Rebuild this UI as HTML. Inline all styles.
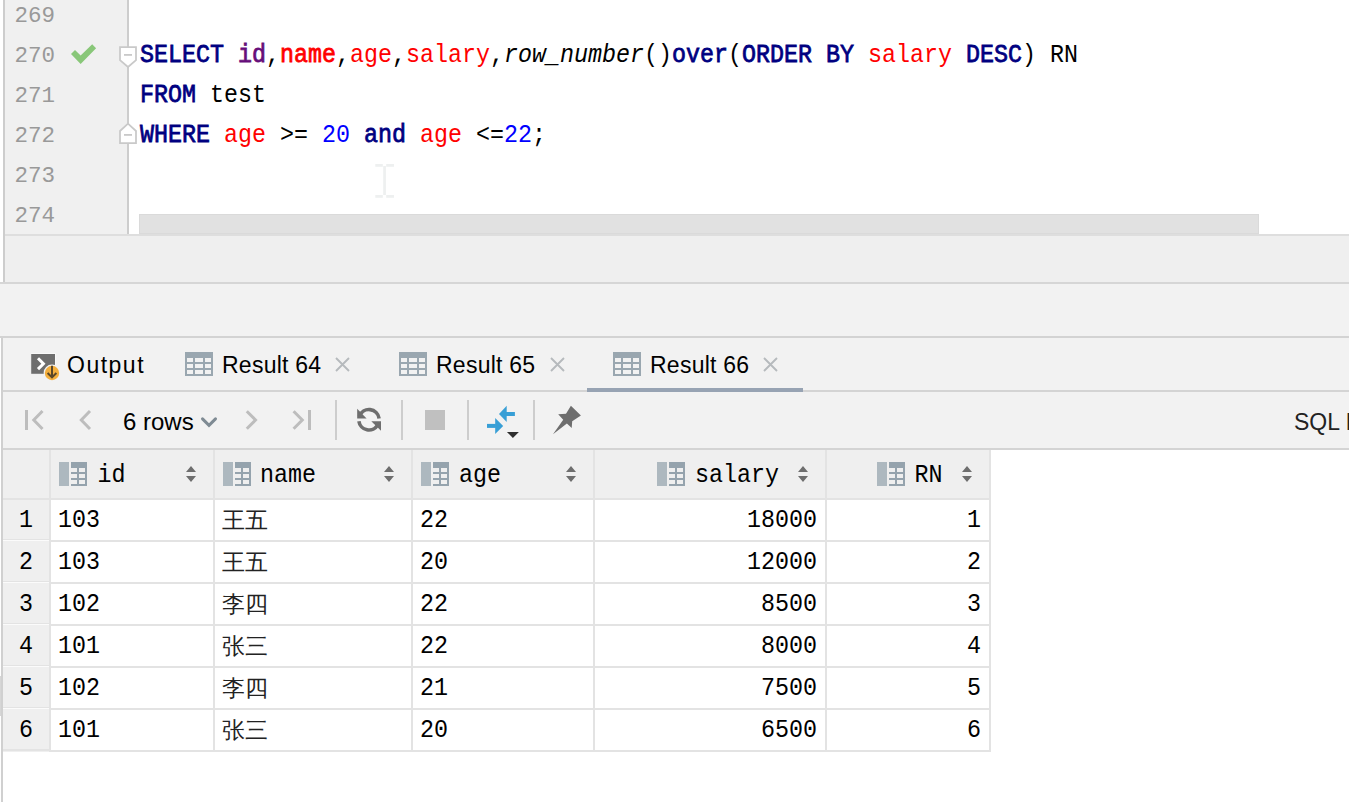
<!DOCTYPE html>
<html><head><meta charset="utf-8">
<style>
*{margin:0;padding:0;box-sizing:border-box}
html,body{width:1349px;height:802px;overflow:hidden;background:#fff}
body{position:relative;font-family:"Liberation Sans",sans-serif}
.abs{position:absolute}
.mono{font-family:"Liberation Mono",monospace}
/* editor */
#ed-left{left:0;top:0;width:3px;height:282px;background:#fff}
#ed-lb{left:3px;top:0;width:2px;height:282px;background:#cdcdcd}
#gutter{left:5px;top:0;width:122px;height:234px;background:#f0f0f0}
#gline{left:127px;top:0;width:2px;height:234px;background:#cdcdcd}
#code{left:129px;top:0;width:1220px;height:234px;background:#fff}
.ln{position:absolute;left:5px;width:50px;text-align:right;font-family:"Liberation Mono",monospace;font-size:22.5px;color:#999;line-height:40px;height:40px}
.cl{position:absolute;left:140px;transform:scaleY(1.12);transform-origin:0 10px;margin-top:.5px;font-family:"Liberation Mono",monospace;font-size:23.33px;line-height:40px;height:40px;white-space:pre;color:#000}
.kw{color:#000080;-webkit-text-stroke:0.7px #000080}
.col{color:#ff0000}
.colb{color:#ff0000;-webkit-text-stroke:0.7px #ff0000}
.pur{color:#660e7a;-webkit-text-stroke:0.7px #660e7a}
.num{color:#0000ff}
.it{font-style:italic}
#thumb{left:139px;top:214px;width:1120px;height:20px;background:#e1e1e1;border:1px solid #dadada}
#hl1{left:5px;top:234px;width:1344px;height:2px;background:#dedede}
#stat{left:5px;top:236px;width:1344px;height:46px;background:#efefef}
#hl2{left:0;top:282px;width:1349px;height:2px;background:#d6d6d6}
#gap{left:0;top:284px;width:1349px;height:52px;background:#f2f2f2}
#hl3{left:0;top:336px;width:1349px;height:2px;background:#d3d3d3}
/* bottom panel */
#bp-lb{left:1px;top:338px;width:2px;height:464px;background:#d0d0d0}
#tabs{left:3px;top:338px;width:1346px;height:52px;background:#f2f2f2}
#hl4{left:3px;top:390px;width:1346px;height:2px;background:#d4d4d4}
#tb{left:3px;top:392px;width:1346px;height:56px;background:#f2f2f2}
#hl5{left:3px;top:448px;width:1346px;height:2px;background:#d4d4d4}
.tabt{position:absolute;top:338.5px;letter-spacing:.25px;height:52px;line-height:52px;font-size:23px;color:#000;white-space:nowrap}
.sep{position:absolute;top:400px;width:2px;height:40px;background:#cdcdcd}
/* grid */
.hdr{position:absolute;top:450px;height:48px;background:#efefef}
.rh{position:absolute;left:3px;width:46px;background:#efefef}
.vl{position:absolute;width:2px;background:#e3e3e3}
.hz{position:absolute;height:2px;background:#e3e3e3}
.cell{position:absolute;transform:scaleY(1.13);transform-origin:0 11px;font-family:"Liberation Mono",monospace;font-size:23.33px;line-height:42px;height:42px;white-space:pre;color:#000}
.r{text-align:right}
.rn{text-align:center}
.rhl{background:#f5f5f5}
.cjk{font-family:"Liberation Serif",serif;font-size:23px;font-weight:300;margin-top:1.5px;color:#222;transform:none!important}
</style></head><body>
<div class="abs" id="ed-left"></div>
<div class="abs" id="ed-lb"></div>
<div class="abs" id="gutter"></div>
<div class="abs" id="gline"></div>
<div class="abs" id="code"></div>

<div class="ln" style="top:-4px">269</div>
<div class="ln" style="top:36px">270</div>
<div class="ln" style="top:76px">271</div>
<div class="ln" style="top:116px">272</div>
<div class="ln" style="top:156px">273</div>
<div class="ln" style="top:196px">274</div>

<div class="cl" style="top:33px"><span class="kw">SELECT</span> <span class="pur">id</span>,<span class="colb">name</span>,<span class="col">age</span>,<span class="col">salary</span>,<span class="it">row_number</span>()<span class="kw">over</span>(<span class="kw">ORDER BY</span> <span class="col">salary</span> <span class="kw">DESC</span>) RN</div>
<div class="cl" style="top:73px"><span class="kw">FROM</span> test</div>
<div class="cl" style="top:113px"><span class="kw">WHERE</span> <span class="col">age</span> &gt;= <span class="num">20</span> <span class="kw">and</span> <span class="col">age</span> &lt;=<span class="num">22</span>;</div>


<!-- gutter icons -->
<svg class="abs" style="left:0;top:0" width="140" height="234">
<polygon points="71,54.1 75,50.1 80.65,55.5 92.2,44.2 96.1,48.25 80.65,63.9" fill="#89c779"/>
<polygon points="120,47 136,47 136,60.2 128,67 120,60.2" fill="#fff" stroke="#c9c9c9" stroke-width="1.75"/>
<rect x="124" y="54" width="8" height="1.8" fill="#c9c9c9"/>
<polygon points="120,131 128,123.6 136,131 136,143 120,143" fill="#fff" stroke="#c9c9c9" stroke-width="1.75"/>
<rect x="124" y="134" width="8" height="1.8" fill="#c9c9c9"/>
</svg>
<svg class="abs" style="left:370px;top:160px" width="30" height="42">
<rect x="5.3" y="4" width="7.5" height="2.8" fill="#eef0f0"/>
<rect x="16.2" y="4" width="7.8" height="2.8" fill="#eef0f0"/>
<rect x="13.2" y="6" width="2.7" height="29" fill="#eef0f0"/>
<rect x="5.3" y="35" width="7.5" height="2.8" fill="#eef0f0"/>
<rect x="16.2" y="35" width="7.8" height="2.8" fill="#eef0f0"/>
</svg>
<div class="abs" id="thumb"></div>
<div class="abs" id="hl1"></div>
<div class="abs" id="stat"></div>
<div class="abs" id="hl2"></div>
<div class="abs" id="gap"></div>
<div class="abs" id="hl3"></div>

<div class="abs" id="bp-lb"></div>
<div class="abs" style="left:0;top:676px;width:1px;height:40px;background:#d6d6d6"></div>
<div class="abs" id="tabs"></div>
<div class="abs" id="hl4"></div>
<div class="abs" id="tb"></div>
<div class="abs" id="hl5"></div>


<svg class="abs" style="left:26px;top:348px" width="40" height="36">
<rect x="4.7" y="5.5" width="24.8" height="20.8" fill="#6e6e6e" stroke="#f9f9f9" stroke-width="1"/>
<path d="M12 10.3L17.4 15.7L12 21.1" stroke="#fff" stroke-width="3" fill="none"/>
<circle cx="26" cy="25" r="8.4" fill="#f2f2f2"/>
<circle cx="26" cy="25" r="7.2" fill="#f4af3d"/>
<path d="M26 17.8V29 M21.6 25L26 29.4L30.4 25" stroke="#5b4727" stroke-width="2" fill="none"/>
</svg>
<svg class="abs" style="left:185px;top:352px" width="28" height="24"><path fill="#9aa7b0" fill-rule="evenodd" d="M0 0h28v24H0z M2 6h6v4H2z M10 6h8v4h-8z M20 6h6v4h-6z M2 12h6v4H2z M10 12h8v4h-8z M20 12h6v4h-6z M2 18h6v4H2z M10 18h8v4h-8z M20 18h6v4h-6z"/></svg><svg class="abs" style="left:335px;top:357px" width="15" height="15"><path d="M1 1L14 14M14 1L1 14" stroke="#b6babd" stroke-width="1.9"/></svg><svg class="abs" style="left:399px;top:352px" width="28" height="24"><path fill="#9aa7b0" fill-rule="evenodd" d="M0 0h28v24H0z M2 6h6v4H2z M10 6h8v4h-8z M20 6h6v4h-6z M2 12h6v4H2z M10 12h8v4h-8z M20 12h6v4h-6z M2 18h6v4H2z M10 18h8v4h-8z M20 18h6v4h-6z"/></svg><svg class="abs" style="left:550px;top:357px" width="15" height="15"><path d="M1 1L14 14M14 1L1 14" stroke="#b6babd" stroke-width="1.9"/></svg><svg class="abs" style="left:613px;top:352px" width="28" height="24"><path fill="#9aa7b0" fill-rule="evenodd" d="M0 0h28v24H0z M2 6h6v4H2z M10 6h8v4h-8z M20 6h6v4h-6z M2 12h6v4H2z M10 12h8v4h-8z M20 12h6v4h-6z M2 18h6v4H2z M10 18h8v4h-8z M20 18h6v4h-6z"/></svg><svg class="abs" style="left:763px;top:357px" width="15" height="15"><path d="M1 1L14 14M14 1L1 14" stroke="#b6babd" stroke-width="1.9"/></svg><div class="tabt" style="left:67px;letter-spacing:1.5px">Output</div>
<div class="tabt" style="left:222px">Result 64</div>
<div class="tabt" style="left:436px">Result 65</div>
<div class="tabt" style="left:650px">Result 66</div>
<div class="abs" style="left:587px;top:388px;width:216px;height:4px;background:#97a3b3"></div>

<div class="abs" style="left:123px;top:394px;height:56px;line-height:56px;font-size:24px;color:#000;white-space:nowrap">6 rows</div>

<svg class="abs" style="left:0;top:392px" width="600" height="56">
<rect x="25" y="18" width="3" height="20" fill="#bdbdbd"/>
<path d="M42.5 19L33.8 28L42.5 37" stroke="#bdbdbd" stroke-width="3" fill="none"/>
<path d="M90 19L81.3 28L90 37" stroke="#bdbdbd" stroke-width="3" fill="none"/>
<path d="M202.5 26.9L209 33.4L215.5 26.9" stroke="#7f8b94" stroke-width="3" fill="none" stroke-linecap="round"/>
<path d="M246.8 19.2L255.5 28L246.8 36.8" stroke="#bdbdbd" stroke-width="3" fill="none"/>
<path d="M293.6 19.2L302.3 28L293.6 36.8" stroke="#bdbdbd" stroke-width="3" fill="none"/>
<rect x="308" y="18" width="3" height="20" fill="#bdbdbd"/>
<g transform="translate(350,10)">
<path d="M9.4 14.3A10.2 10.2 0 0 1 29.1 16.4" stroke="#6e6e6e" stroke-width="3.6" fill="none"/>
<polygon points="7.2,6.7 7.2,16.4 16.6,16.4" fill="#6e6e6e"/>
<path d="M8.9 19.2A10.2 10.2 0 0 0 27.8 22.9" stroke="#6e6e6e" stroke-width="3.6" fill="none"/>
<polygon points="31,19.3 31,28.7 21.3,19.3" fill="#6e6e6e"/>
</g>
<rect x="425" y="18" width="20" height="20" fill="#c0c0c0"/>
<g transform="translate(482,10)">
<polygon points="17,12 24.7,3.7 24.7,19.95" fill="#389fd6"/>
<rect x="24" y="10" width="8.9" height="4" fill="#389fd6"/>
<polygon points="21.2,23.9 13.2,16 13.2,31.9" fill="#389fd6"/>
<rect x="5" y="21.9" width="8.9" height="4" fill="#389fd6"/>
<polygon points="24.9,29.9 36.9,29.9 30.9,35.9" fill="#2f2f2f"/>
</g>
<g transform="translate(546,8)">
<polygon points="24.9,5.7 34.9,15.5 26.2,21.2 25.7,27.9 20.9,23.4 7,34.2 17.2,19.7 12.2,14.2 20,13.7" fill="#6e6e6e"/>
</g>
</svg>
<div class="sep" style="left:335px"></div>
<div class="sep" style="left:401px"></div>
<div class="sep" style="left:467px"></div>
<div class="sep" style="left:533px"></div>
<div class="abs" style="left:1294px;top:394px;height:56px;line-height:56px;font-size:23px;color:#222;white-space:nowrap">SQL I</div>

<!-- grid -->
<div class="hdr" style="left:3px;width:987px"></div>
<div class="abs" style="left:51px;top:500px;width:939px;height:252px;background:#fff"></div>
<div class="rh" style="top:500px;height:252px"></div>
<div class="vl" style="left:49px;top:450px;height:302px"></div>
<div class="vl" style="left:213px;top:450px;height:302px"></div>
<div class="vl" style="left:411px;top:450px;height:302px"></div>
<div class="vl" style="left:593px;top:450px;height:302px"></div>
<div class="vl" style="left:825px;top:450px;height:302px"></div>
<div class="vl" style="left:989px;top:450px;height:302px"></div>
<div class="hz" style="left:51px;top:498px;width:940px"></div>
<div class="abs" style="left:3px;top:498px;width:46px;height:2px;background:#e3e3e3"></div>
<div class="hz" style="left:51px;top:540px;width:940px"></div>
<div class="abs" style="left:3px;top:539px;width:46px;height:2px;background:#e3e3e3"></div><div class="abs" style="left:3px;top:540px;width:46px;height:1px;background:#fbfbfb"></div>
<div class="hz" style="left:51px;top:582px;width:940px"></div>
<div class="abs" style="left:3px;top:581px;width:46px;height:2px;background:#e3e3e3"></div><div class="abs" style="left:3px;top:582px;width:46px;height:1px;background:#fbfbfb"></div>
<div class="hz" style="left:51px;top:624px;width:940px"></div>
<div class="abs" style="left:3px;top:623px;width:46px;height:2px;background:#e3e3e3"></div><div class="abs" style="left:3px;top:624px;width:46px;height:1px;background:#fbfbfb"></div>
<div class="hz" style="left:51px;top:666px;width:940px"></div>
<div class="abs" style="left:3px;top:665px;width:46px;height:2px;background:#e3e3e3"></div><div class="abs" style="left:3px;top:666px;width:46px;height:1px;background:#fbfbfb"></div>
<div class="hz" style="left:51px;top:708px;width:940px"></div>
<div class="abs" style="left:3px;top:707px;width:46px;height:2px;background:#e3e3e3"></div><div class="abs" style="left:3px;top:708px;width:46px;height:1px;background:#fbfbfb"></div>
<div class="hz" style="left:51px;top:750px;width:940px"></div>
<div class="abs" style="left:3px;top:749px;width:46px;height:2px;background:#e3e3e3"></div>
<div class="cell rn" style="left:3px;top:498px;width:46px">1</div>
<div class="cell" style="left:58px;top:498px">103</div>
<div class="cell cjk" style="left:222px;top:498px">王五</div>
<div class="cell" style="left:420px;top:498px">22</div>
<div class="cell r" style="left:595px;top:498px;width:222px">18000</div>
<div class="cell r" style="left:827px;top:498px;width:154px">1</div>
<div class="cell rn" style="left:3px;top:540px;width:46px">2</div>
<div class="cell" style="left:58px;top:540px">103</div>
<div class="cell cjk" style="left:222px;top:540px">王五</div>
<div class="cell" style="left:420px;top:540px">20</div>
<div class="cell r" style="left:595px;top:540px;width:222px">12000</div>
<div class="cell r" style="left:827px;top:540px;width:154px">2</div>
<div class="cell rn" style="left:3px;top:582px;width:46px">3</div>
<div class="cell" style="left:58px;top:582px">102</div>
<div class="cell cjk" style="left:222px;top:582px">李四</div>
<div class="cell" style="left:420px;top:582px">22</div>
<div class="cell r" style="left:595px;top:582px;width:222px">8500</div>
<div class="cell r" style="left:827px;top:582px;width:154px">3</div>
<div class="cell rn" style="left:3px;top:624px;width:46px">4</div>
<div class="cell" style="left:58px;top:624px">101</div>
<div class="cell cjk" style="left:222px;top:624px">张三</div>
<div class="cell" style="left:420px;top:624px">22</div>
<div class="cell r" style="left:595px;top:624px;width:222px">8000</div>
<div class="cell r" style="left:827px;top:624px;width:154px">4</div>
<div class="cell rn" style="left:3px;top:666px;width:46px">5</div>
<div class="cell" style="left:58px;top:666px">102</div>
<div class="cell cjk" style="left:222px;top:666px">李四</div>
<div class="cell" style="left:420px;top:666px">21</div>
<div class="cell r" style="left:595px;top:666px;width:222px">7500</div>
<div class="cell r" style="left:827px;top:666px;width:154px">5</div>
<div class="cell rn" style="left:3px;top:708px;width:46px">6</div>
<div class="cell" style="left:58px;top:708px">101</div>
<div class="cell cjk" style="left:222px;top:708px">张三</div>
<div class="cell" style="left:420px;top:708px">20</div>
<div class="cell r" style="left:595px;top:708px;width:222px">6500</div>
<div class="cell r" style="left:827px;top:708px;width:154px">6</div>

<svg class="abs" style="left:59px;top:462px" width="28" height="24"><rect x="0" y="0" width="10" height="24" fill="#adb8bf"/><path fill="#95a3ad" fill-rule="evenodd" d="M12 0h16v24H12z M12 6h6v4h-6z M20 6h6v4h-6z M12 12h6v4h-6z M20 12h6v4h-6z M12 18h6v4h-6z M20 18h6v4h-6z"/></svg>
<div class="cell" style="left:97.5px;top:453px">id</div>
<svg class="abs" style="left:186px;top:466px" width="10" height="16"><path d="M0 6L5 0L10 6z M0 10H10L5 16z" fill="#6e6e6e"/></svg>
<svg class="abs" style="left:223px;top:462px" width="28" height="24"><rect x="0" y="0" width="10" height="24" fill="#adb8bf"/><path fill="#95a3ad" fill-rule="evenodd" d="M12 0h16v24H12z M12 6h6v4h-6z M20 6h6v4h-6z M12 12h6v4h-6z M20 12h6v4h-6z M12 18h6v4h-6z M20 18h6v4h-6z"/></svg>
<div class="cell" style="left:260px;top:453px">name</div>
<svg class="abs" style="left:384px;top:466px" width="10" height="16"><path d="M0 6L5 0L10 6z M0 10H10L5 16z" fill="#6e6e6e"/></svg>
<svg class="abs" style="left:421px;top:462px" width="28" height="24"><rect x="0" y="0" width="10" height="24" fill="#adb8bf"/><path fill="#95a3ad" fill-rule="evenodd" d="M12 0h16v24H12z M12 6h6v4h-6z M20 6h6v4h-6z M12 12h6v4h-6z M20 12h6v4h-6z M12 18h6v4h-6z M20 18h6v4h-6z"/></svg>
<div class="cell" style="left:459px;top:453px">age</div>
<svg class="abs" style="left:566px;top:466px" width="10" height="16"><path d="M0 6L5 0L10 6z M0 10H10L5 16z" fill="#6e6e6e"/></svg>
<svg class="abs" style="left:657px;top:462px" width="28" height="24"><rect x="0" y="0" width="10" height="24" fill="#adb8bf"/><path fill="#95a3ad" fill-rule="evenodd" d="M12 0h16v24H12z M12 6h6v4h-6z M20 6h6v4h-6z M12 12h6v4h-6z M20 12h6v4h-6z M12 18h6v4h-6z M20 18h6v4h-6z"/></svg>
<div class="cell" style="left:695px;top:453px">salary</div>
<svg class="abs" style="left:798px;top:466px" width="10" height="16"><path d="M0 6L5 0L10 6z M0 10H10L5 16z" fill="#6e6e6e"/></svg>
<svg class="abs" style="left:877px;top:462px" width="28" height="24"><rect x="0" y="0" width="10" height="24" fill="#adb8bf"/><path fill="#95a3ad" fill-rule="evenodd" d="M12 0h16v24H12z M12 6h6v4h-6z M20 6h6v4h-6z M12 12h6v4h-6z M20 12h6v4h-6z M12 18h6v4h-6z M20 18h6v4h-6z"/></svg>
<div class="cell" style="left:914.5px;top:453px">RN</div>
<svg class="abs" style="left:962px;top:466px" width="10" height="16"><path d="M0 6L5 0L10 6z M0 10H10L5 16z" fill="#6e6e6e"/></svg>
</body></html>
